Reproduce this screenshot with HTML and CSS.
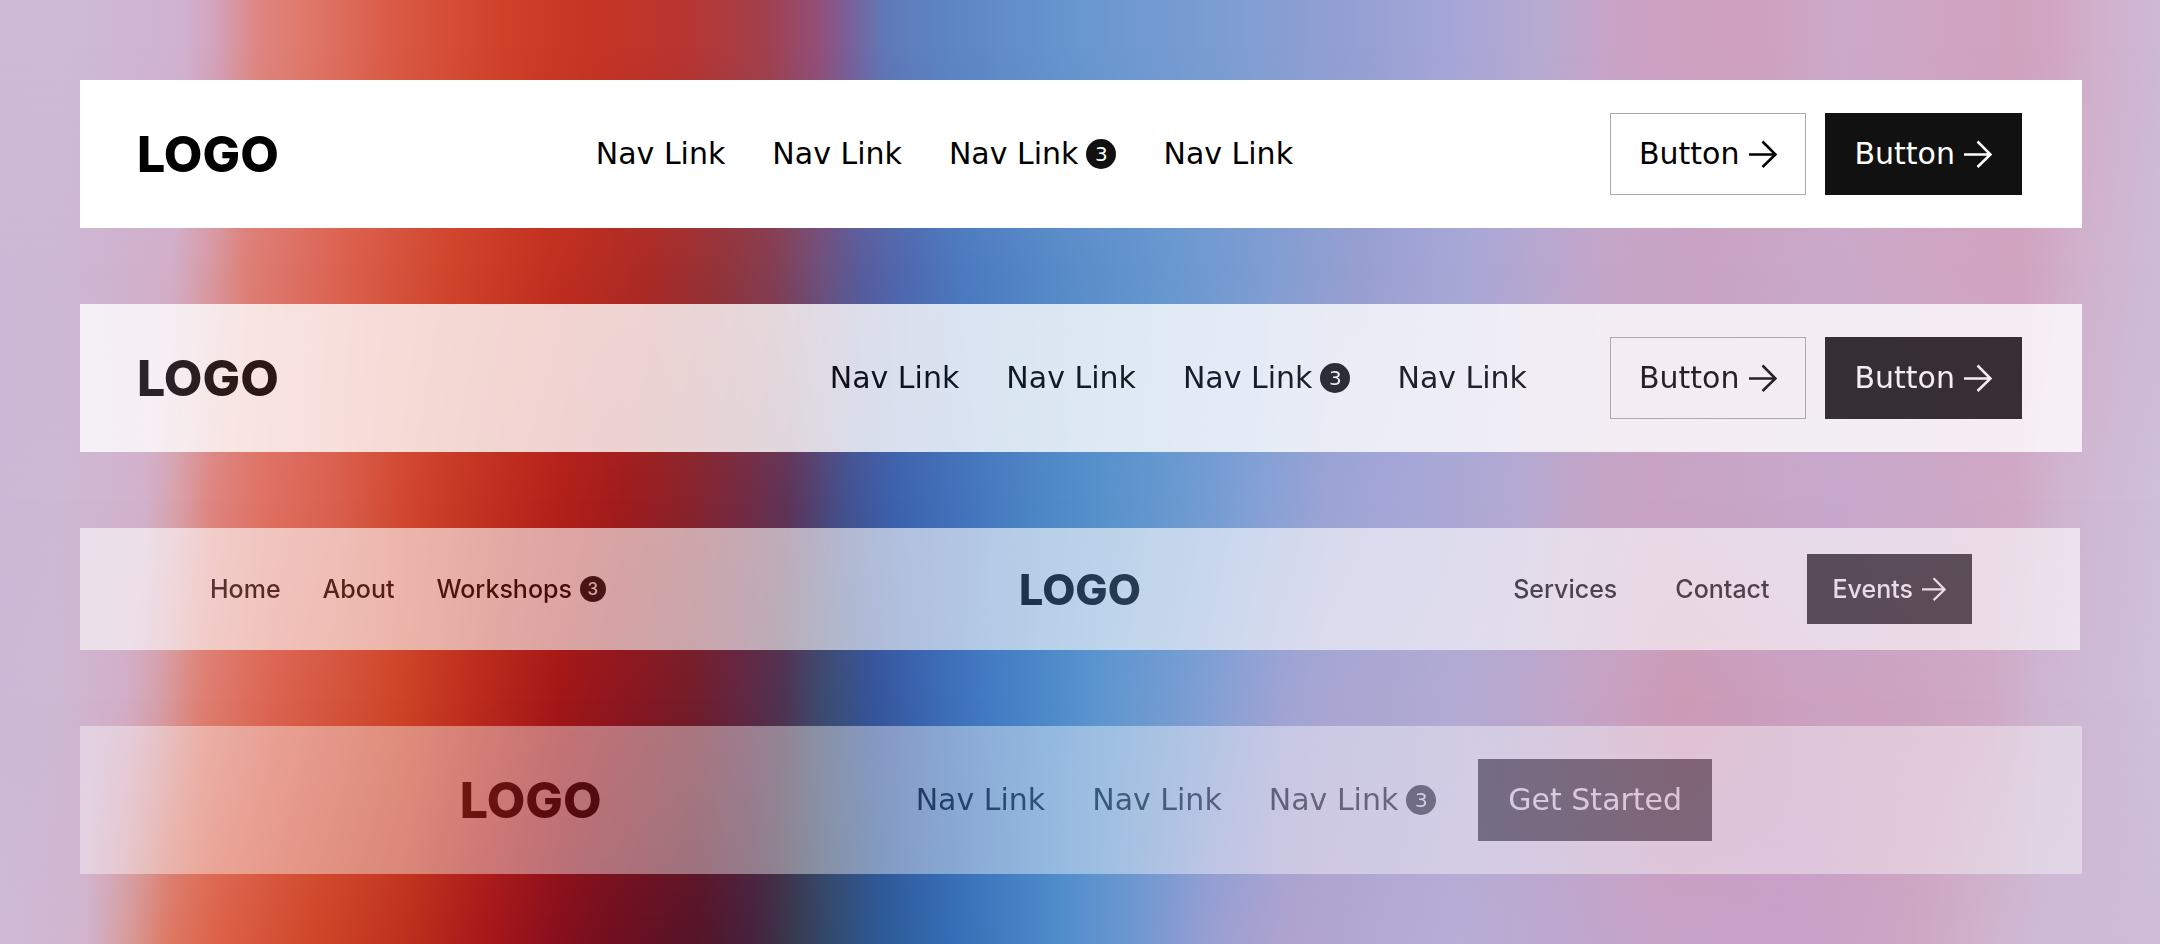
FILE: index.html
```html
<!DOCTYPE html>
<html lang="en">
<head>
<meta charset="utf-8">
<meta name="viewport" content="width=device-width, initial-scale=1">
<title>Navigation bars</title>
<link rel="stylesheet" href="styles.css">
</head>
<body>
<svg class="sprite" aria-hidden="true">
  <symbol id="arrow" viewBox="0 0 28 28">
    <path d="M0 14.5H26.5M13.5 1.5L26.5 14.5L13.5 27" fill="none" stroke="currentColor" stroke-width="2.6"/>
  </symbol>
</svg>
<div class="backdrop" aria-hidden="true">
  <div class="wash wash-1"></div>
  <div class="wash wash-2"></div>
  <div class="wash wash-3"></div>
  <div class="wash wash-4"></div>
  <div class="wash wash-5"></div>
</div>
<main class="page">
  <header class="bar bar-solid">
    <a class="logo" href="#">LOGO</a>
    <nav class="links">
      <a class="link" href="#">Nav Link</a>
      <a class="link" href="#">Nav Link</a>
      <a class="link" href="#">Nav Link <span class="badge">3</span></a>
      <a class="link" href="#">Nav Link</a>
    </nav>
    <div class="actions">
      <button class="btn btn-outline" type="button">Button <svg class="arrow"><use href="#arrow"/></svg></button>
      <button class="btn" type="button">Button <svg class="arrow"><use href="#arrow"/></svg></button>
    </div>
  </header>

  <header class="bar bar-right">
    <a class="logo" href="#">LOGO</a>
    <nav class="links">
      <a class="link" href="#">Nav Link</a>
      <a class="link" href="#">Nav Link</a>
      <a class="link" href="#">Nav Link <span class="badge">3</span></a>
      <a class="link" href="#">Nav Link</a>
    </nav>
    <div class="actions">
      <button class="btn btn-outline" type="button">Button <svg class="arrow"><use href="#arrow"/></svg></button>
      <button class="btn" type="button">Button <svg class="arrow"><use href="#arrow"/></svg></button>
    </div>
  </header>

  <header class="bar bar-split">
    <nav class="links links-start">
      <a class="link" href="#">Home</a>
      <a class="link" href="#">About</a>
      <a class="link" href="#">Workshops <span class="badge">3</span></a>
    </nav>
    <a class="logo" href="#">LOGO</a>
    <div class="side-end">
      <nav class="links links-end">
        <a class="link" href="#">Services</a>
        <a class="link" href="#">Contact</a>
      </nav>
      <button class="btn" type="button">Events <svg class="arrow"><use href="#arrow"/></svg></button>
    </div>
  </header>

  <header class="bar bar-center">
    <a class="logo" href="#">LOGO</a>
    <nav class="links">
      <a class="link" href="#">Nav Link</a>
      <a class="link" href="#">Nav Link</a>
      <a class="link" href="#">Nav Link <span class="badge">3</span></a>
    </nav>
    <button class="btn" type="button">Get Started</button>
  </header>
</main>
</body>
</html>
```
FILE: styles.css
```css
* { box-sizing: border-box; }

body {
  margin: 0;
  font-family: "DejaVu Sans", sans-serif;
  font-size: 30px;
  line-height: 36px;
  color: #000;
}

.sprite { position: absolute; width: 0; height: 0; }

/* Colour wash: each layer fades in over the one before it */
.backdrop { position: absolute; inset: 0; z-index: -1; overflow: hidden; }
.wash { position: absolute; inset: 0; }

.wash-1 {
  background: linear-gradient(90deg, #cdbbd5 0%, #cdbbd5 3%, #d0b2d0 8.5%, #d3a2ba 10%, #de8580 12%, #df7b6e 13.8%, #d95a44 18.3%, #cf4029 23.4%, #c53424 27.6%, #b93530 31.5%, #a2404c 35.4%, #92507a 38%, #7b5f97 39.2%, #6079b8 41%, #5d85c2 43.8%, #6796cf 49.6%, #7a9dd2 55.8%, #929fd3 62%, #a5a6d7 67.2%, #b8abd0 71.6%, #c7a5c8 74.2%, #cda0c2 76.5%, #cfa0bd 81%, #cca9c9 85.2%, #cfa5c4 89.3%, #d0a2be 93%, #d1a6c2 95%, #d0b0cc 97%, #cdb9d5 100%);
}
.wash-2 {
  background: linear-gradient(90deg, #cbb8d6 0%, #cdb7d4 3%, #d2aec8 8%, #d899a2 9.8%, #dd8078 11.4%, #db6250 15.8%, #d0452c 20.8%, #c23020 25.4%, #ab2b26 30%, #943439 33.2%, #853f52 35.8%, #6d5280 38.2%, #5a5c9c 39.8%, #5068ad 41.7%, #4c7bc1 44.8%, #588bc8 49%, #6697cf 53.8%, #7e9dd2 58.5%, #989fd0 63%, #a8a8d6 68%, #c3a6c9 74%, #c8a3c3 78.7%, #caa9c8 85.2%, #cfa5c2 90.3%, #d1a3bf 93.5%, #d0b2cd 96.5%, #cdbbd6 100%);
  mask-image: linear-gradient(180deg, transparent 5%, #000 28%);
}
.wash-3 {
  background: linear-gradient(90deg, #cbb8d6 0%, #cdb9d3 2.8%, #d2b1cc 6.7%, #d8a0a8 8.3%, #de8580 9.8%, #df7163 12.3%, #d9604e 15.6%, #d0452d 19%, #c13322 22.2%, #b3211a 25.8%, #a01c1c 28.8%, #8a232b 31.7%, #732b42 34.4%, #5e3459 36.5%, #435290 39.2%, #3c62ad 41.4%, #4373bc 44.6%, #4d86c5 48%, #5590cb 50.6%, #6b9ad0 54.8%, #80a0d6 57.8%, #9ba4d4 61.4%, #a6a7d7 65.1%, #b3aad2 70.4%, #c0a6c8 72.8%, #c8a3c3 76.3%, #c6a8cc 85.2%, #cca8c7 90.3%, #d0a9c6 93.2%, #cfb5d0 95.5%, #cfbfd9 100%);
  mask-image: linear-gradient(180deg, transparent 28%, #000 53%);
}
.wash-4 {
  background: linear-gradient(90deg, #cbb8d6 0%, #cdb9d3 2.5%, #d2aec7 5.8%, #d69fa8 7.4%, #de8073 9.3%, #db6653 12.4%, #cd4427 18.6%, #bd2d1d 21.8%, #a31717 25.8%, #8c1720 28.9%, #741d2a 32%, #602844 34.5%, #4f3350 36.2%, #3f486c 37.8%, #3a4f7c 38.8%, #36549a 40.4%, #3a62ad 42.3%, #4179c2 45.4%, #4d8ac9 48.5%, #5d96d0 50.9%, #6b9ad0 53%, #809fd4 55.8%, #9fa4d3 59.4%, #a9a6d2 61.5%, #b2abd3 67.5%, #bfa7cb 71.6%, #ca9fbd 75.7%, #cc9ab5 77.8%, #cba0c0 83.3%, #cda4c0 88.5%, #cfa9c5 92%, #cdb5d1 94.4%, #cfc0da 100%);
  mask-image: linear-gradient(180deg, transparent 53%, #000 74%);
}
.wash-5 {
  background: linear-gradient(90deg, #cfbad6 0%, #d1b4ce 4%, #d89a98 6%, #dd7862 7.8%, #dc6248 10%, #cf4629 14.5%, #bd301c 18.8%, #a8181a 22.3%, #8a101d 25.5%, #720f1f 28%, #541428 32.3%, #45223c 34.8%, #373a50 36.8%, #33496a 38.3%, #2d5a96 40.8%, #346db5 44%, #508dcb 49.1%, #6c97cf 52.3%, #9a9fd2 56.1%, #b0a3ce 60%, #b6add6 67%, #bda8cf 72%, #c6a3c8 76.5%, #c8a0c9 82.9%, #cda6c4 88.5%, #cfb3cd 91.8%, #cebbd6 95%, #cebcd8 100%);
  mask-image: linear-gradient(180deg, transparent 74%, #000 100%);
}

.page {
  display: flex;
  flex-direction: column;
  gap: 76px;
  min-height: 100vh;
  padding: 80px 78px 70px 80px;
}

.bar {
  display: flex;
  align-items: center;
  justify-content: space-between;
  padding: 33px 60px 33px 57px;
  background: #fff;
}

.logo {
  font-family: Inter, "Open Sans", sans-serif;
  font-size: 50px;
  line-height: 50px;
  font-weight: 800;
  color: #000;
  text-decoration: none;
}

.links { display: flex; align-items: center; gap: 47px; }

.link {
  display: flex;
  align-items: center;
  gap: 8px;
  color: #000;
  text-decoration: none;
  white-space: nowrap;
}

.badge {
  display: grid;
  place-items: center;
  width: 30px;
  height: 30px;
  border-radius: 50%;
  background: #111;
  color: #fff;
  font-size: 20px;
  line-height: 30px;
}

.actions { display: flex; align-items: center; gap: 19px; }

.btn {
  display: flex;
  align-items: center;
  gap: 9px;
  height: 82px;
  padding: 0 30px;
  border: 0;
  background: #111;
  color: #fff;
  font: inherit;
  white-space: nowrap;
}

.btn-outline {
  border: 1px solid #aaa;
  padding: 0 28px;
  background: #fff;
  color: #000;
}

.arrow { width: 28px; height: 28px; }

.bar-right { opacity: 0.8; }
.bar-right .links { margin-left: auto; margin-right: 83px; }

.bar-split {
  display: grid;
  grid-template-columns: 1fr auto 1fr;
  margin-right: 2px;
  padding: 26px 108px 26px 130px;
  font-family: Inter, sans-serif;
  font-size: 25px;
  font-weight: 500;
  line-height: 30px;
  opacity: 0.6;
}
.bar-split .logo { font-size: 43px; line-height: 43px; margin-right: 22px; }
.bar-split .badge { width: 26px; height: 26px; font-size: 17px; line-height: 26px; }
.bar-split .btn { height: 70px; padding: 0 26px; }
.bar-split .arrow { width: 24px; height: 24px; }
.links-start { gap: 42px; }
.links-end { gap: 58px; }
.side-end { display: flex; align-items: center; justify-content: flex-end; gap: 37px; }

.bar-center {
  justify-content: center;
  padding-left: 70px;
  opacity: 0.4;
}
.bar-center .links { margin-left: 314px; margin-right: 42px; }
```
